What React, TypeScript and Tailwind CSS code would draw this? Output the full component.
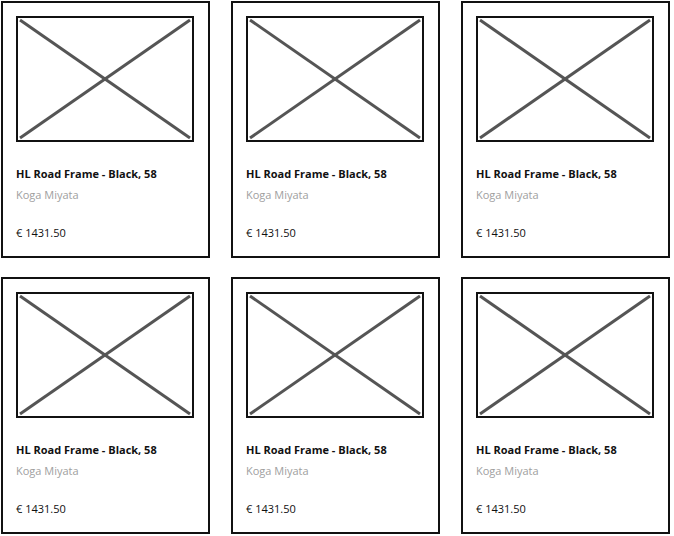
import React from "react";

const products = Array.from({ length: 6 }, () => ({
  name: "HL Road Frame - Black, 58",
  brand: "Koga Miyata",
  price: "€ 1431.50",
}));

function Placeholder() {
  return (
    <div className="h-[126px] w-[178px] border-2 border-[#111]">
      <svg viewBox="0 0 174 122" className="block h-full w-full" preserveAspectRatio="none">
        <line x1="2" y1="2" x2="172" y2="120" stroke="#555" strokeWidth="3" />
        <line x1="172" y1="2" x2="2" y2="120" stroke="#555" strokeWidth="3" />
      </svg>
    </div>
  );
}

export default function App() {
  return (
    <div
      className="min-h-[536px] w-[674px] bg-white pl-[1px] pt-[1px] text-black"
      style={{ fontFamily: '"Open Sans", "Noto Sans", sans-serif' }}
    >
      <div className="grid grid-cols-[209px_209px_209px] gap-x-[21px] gap-y-[19px]">
        {products.map((p, i) => (
          <div
            key={i}
            className="h-[257px] border-2 border-[#111] px-[13px] pt-[13px]"
          >
            <Placeholder />
            <p className="mt-[24px] text-[11px] font-bold leading-[16px] text-[#111]">{p.name}</p>
            <p className="mt-[5px] text-[11px] leading-[16px] text-[#a0a0a0]">{p.brand}</p>
            <p className="mt-[22px] text-[11px] leading-[16px] text-[#111]">{p.price}</p>
          </div>
        ))}
      </div>
    </div>
  );
}
